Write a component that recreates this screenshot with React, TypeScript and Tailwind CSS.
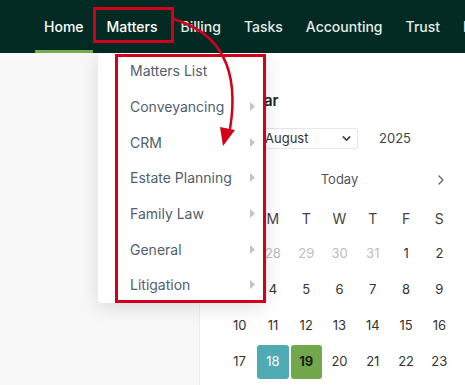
import React from 'react';
import { ChevronDown, ChevronLeft, ChevronRight } from 'lucide-react';

const navItems = ['Home', 'Matters', 'Billing', 'Tasks', 'Accounting', 'Trust', 'Reports'];

const menuItems = [
  { label: 'Matters List', sub: false },
  { label: 'Conveyancing', sub: true },
  { label: 'CRM', sub: true },
  { label: 'Estate Planning', sub: true },
  { label: 'Family Law', sub: true },
  { label: 'General', sub: true },
  { label: 'Litigation', sub: true },
];

const weekdays = ['S', 'M', 'T', 'W', 'T', 'F', 'S'];

type Day = { n: number; muted?: boolean; kind?: 'selected' | 'today' };

const weeks: Day[][] = [
  [{ n: 27, muted: true }, { n: 28, muted: true }, { n: 29, muted: true }, { n: 30, muted: true }, { n: 31, muted: true }, { n: 1 }, { n: 2 }],
  [{ n: 3 }, { n: 4 }, { n: 5 }, { n: 6 }, { n: 7 }, { n: 8 }, { n: 9 }],
  [{ n: 10 }, { n: 11 }, { n: 12 }, { n: 13 }, { n: 14 }, { n: 15 }, { n: 16 }],
  [{ n: 17 }, { n: 18, kind: 'selected' }, { n: 19, kind: 'today' }, { n: 20 }, { n: 21 }, { n: 22 }, { n: 23 }],
];

const Caret = () => (
  <svg width="5" height="9" viewBox="0 0 5 9" className="shrink-0">
    <polygon points="0,0 5,4.5 0,9" fill="#c4c4c4" />
  </svg>
);

const DayCell: React.FC<{ day: Day }> = ({ day }) => {
  if (day.kind === 'selected') {
    return (
      <div className="h-[36px] flex items-center justify-center">
        <div className="w-[32px] h-[34px] rounded-[3px] bg-[#4eabb3] text-white flex items-center justify-center">{day.n}</div>
      </div>
    );
  }
  if (day.kind === 'today') {
    return (
      <div className="h-[36px] flex items-center justify-center">
        <div className="w-[31px] h-[34px] rounded-[3px] bg-[#72a84b] text-[#1c1c1c] font-bold flex items-center justify-center">{day.n}</div>
      </div>
    );
  }
  return (
    <div className={`h-[36px] flex items-center justify-center ${day.muted ? 'text-[#bdbdbd]' : 'text-[#333]'}`}>{day.n}</div>
  );
};

export default function App() {
  return (
    <div className="relative w-[465px] h-[385px] overflow-hidden bg-[#f8f8f8] font-['Inter',sans-serif]">
      {/* top nav */}
      <nav className="h-[53px] bg-[#032b24] flex items-stretch pl-[35px] gap-[5px] whitespace-nowrap overflow-hidden">
        {navItems.map((item, i) => (
          <div
            key={item}
            className={`relative px-[9px] flex items-center text-[14px] font-medium ${i < 2 ? 'text-white' : 'text-[#e4ebe9]'}`}
          >
            {item}
            {i === 0 && <span className="absolute left-0 right-0 bottom-0 h-[3px] bg-[#76ab4e]" />}
          </div>
        ))}
      </nav>

      {/* page body */}
      <div className="flex h-[332px]">
        <div className="w-[199px] shrink-0 bg-[#f8f8f8]" />
        <div className="flex-1 bg-white border-l border-[#ececec] pl-[13px] pt-[38px]">
          <h2 className="text-[15px] leading-[20px] font-semibold text-[#222]">Calendar</h2>
          <div className="mt-[17px] flex items-center">
            <div className="ml-[43px] w-[102px] h-[21px] border border-[#e3e6ea] rounded-[3px] flex items-center justify-between pl-[8px] pr-[4px] text-[13px] text-[#333]">
              <span>August</span>
              <ChevronDown size={13} strokeWidth={3} className="text-[#444]" />
            </div>
            <span className="ml-[21px] text-[13px] text-[#444]">2025</span>
          </div>
          <div className="ml-[10px] w-[233px] mt-[16px] h-[30px] flex items-center justify-between text-[13px] text-[#555]">
            <ChevronLeft size={16} className="text-[#666] ml-[7px]" />
            <span>Today</span>
            <ChevronRight size={16} className="text-[#666] mr-[7px]" />
          </div>
          <div className="ml-[10px] w-[233px] mt-[5px] grid grid-cols-7 text-[13px]">
            {weekdays.map((d, i) => (
              <div key={i} className="h-[36px] flex items-center justify-center text-[14px] text-[#444]">{d}</div>
            ))}
            {weeks.flat().map((day, i) => (
              <DayCell key={i} day={day} />
            ))}
          </div>
        </div>
      </div>

      {/* Matters dropdown */}
      <div className="absolute left-[98px] top-[53px] w-[167px] bg-white rounded-b-[4px] shadow-[0_4px_20px_rgba(0,0,0,0.13)]">
        {menuItems.map((m) => (
          <div key={m.label} className="h-[35.7px] flex items-center justify-between pl-[32px] pr-[10px] text-[14px] text-[#525e6e]">
            <span>{m.label}</span>
            {m.sub && <Caret />}
          </div>
        ))}
      </div>

      {/* red annotations */}
      <div className="absolute left-[93px] top-[7px] w-[81px] h-[36px] border-[3px] border-[#d3001b] pointer-events-none" />
      <div className="absolute left-[115px] top-[54px] w-[151px] h-[249px] border-[3px] border-[#d3001b] pointer-events-none" />
      <svg className="absolute left-0 top-0 pointer-events-none" width="465" height="385">
        <path d="M173 19 C 215 31, 241 62, 230 129" fill="none" stroke="#d3001b" strokeWidth="2.5" />
        <polygon points="220,127 235,130 223,146" fill="#d3001b" />
      </svg>
    </div>
  );
}
